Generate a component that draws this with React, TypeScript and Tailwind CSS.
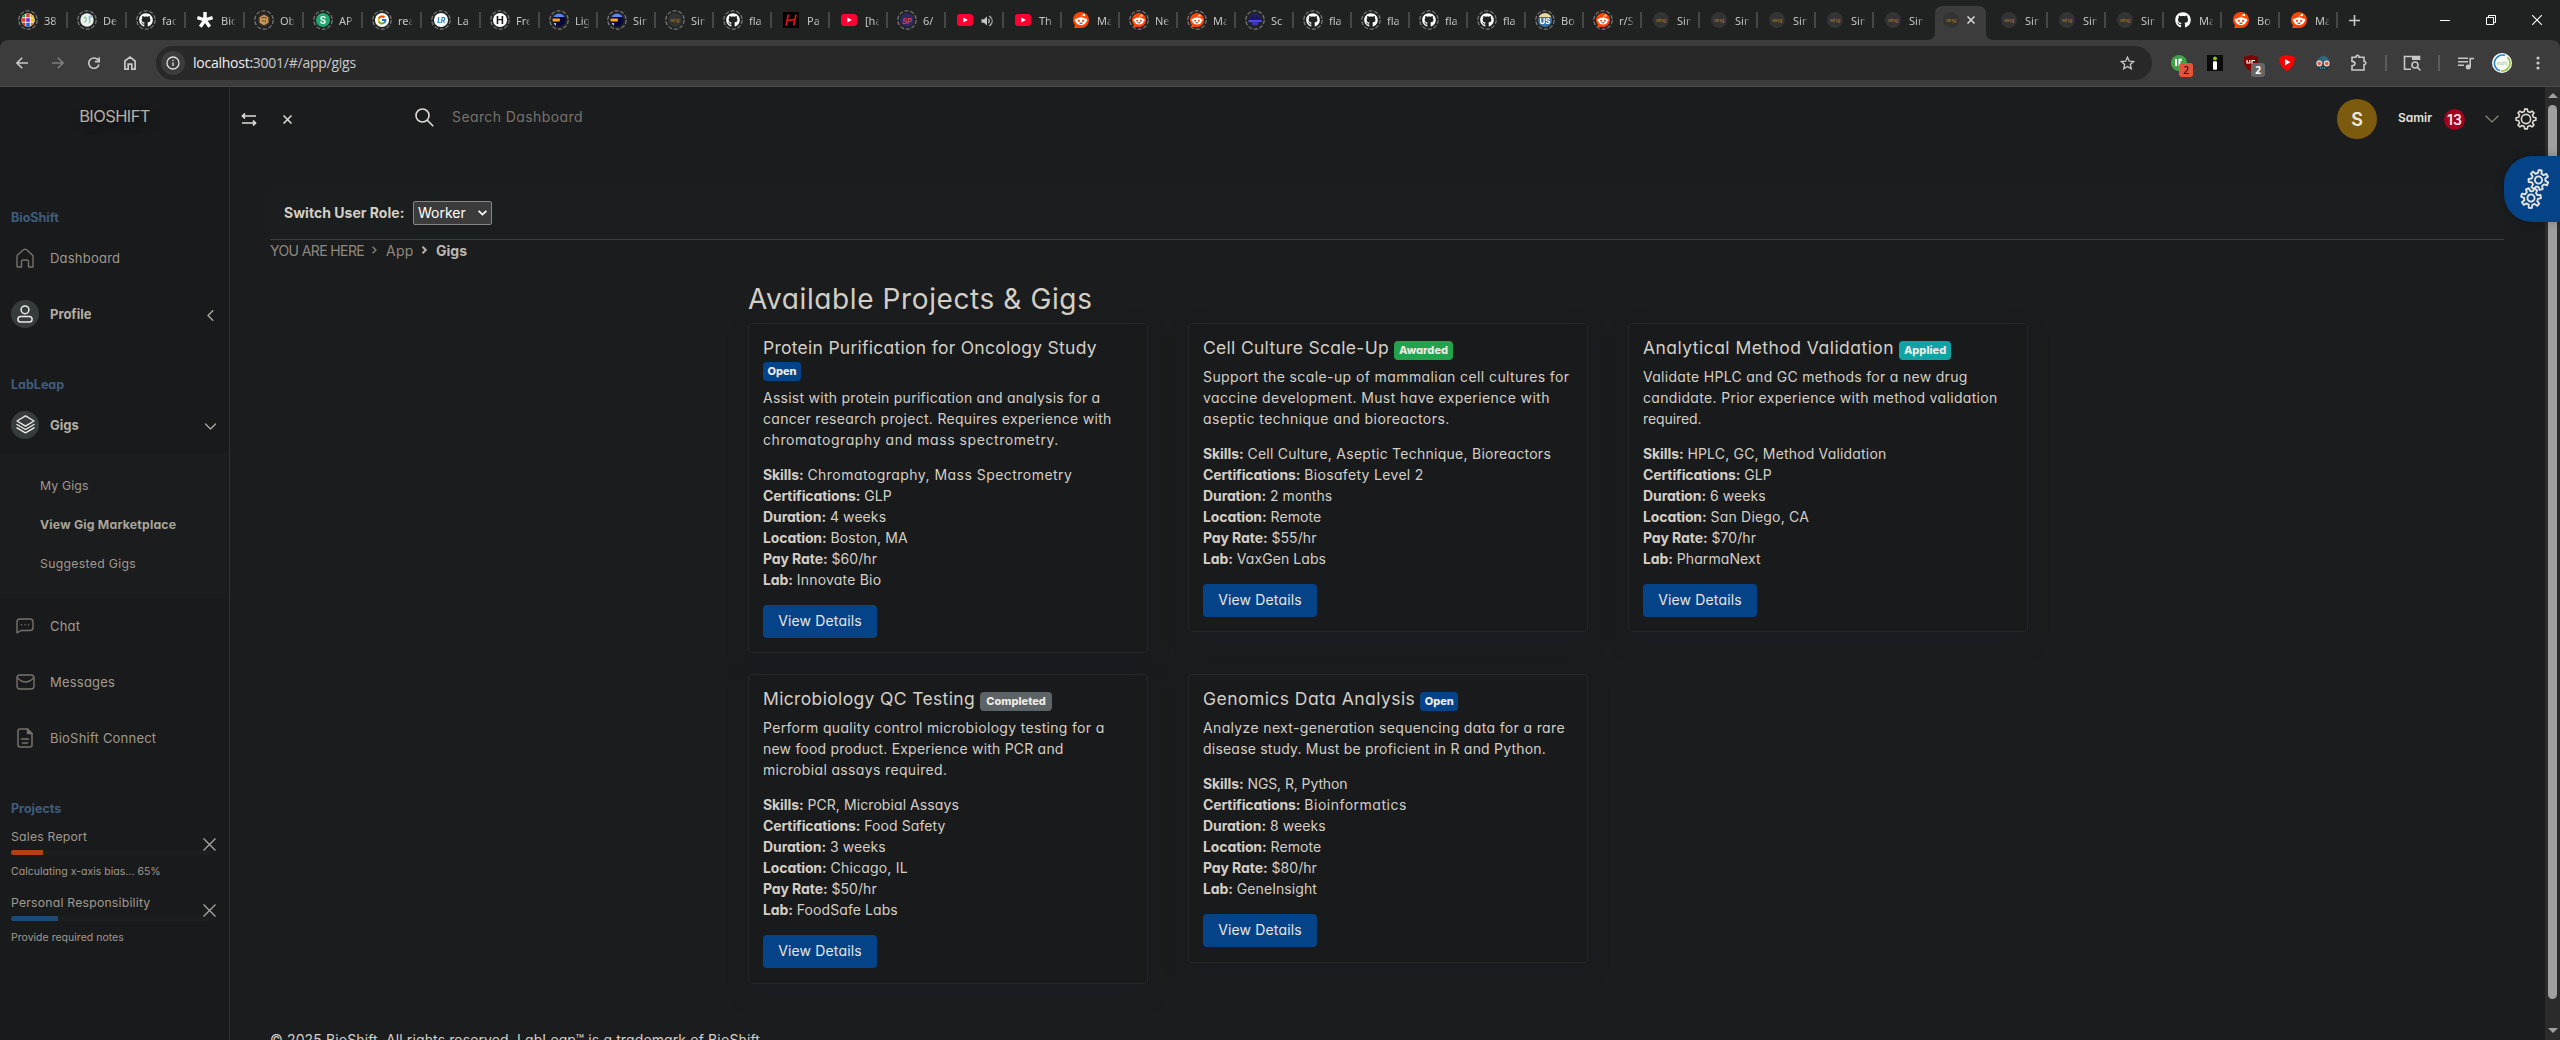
import React from "react";
import { FaGithub } from "react-icons/fa";
import { FcGoogle } from "react-icons/fc";

/* ---------- favicons ---------- */

const Svg = ({ children, size = 16 }: { children: React.ReactNode; size?: number }) => (
  <svg width={size} height={size} viewBox="0 0 16 16" className="block shrink-0">
    {children}
  </svg>
);

const Github = () => <FaGithub className="block size-4 text-white" />;

const Reddit = () => (
  <Svg>
    <circle cx="8" cy="8" r="8" fill="#ff4500" />
    <path d="M1 16 L3 11 L7 16 Z" fill="#ff4500" />
    <circle cx="3.2" cy="8" r="1.5" fill="#fff" />
    <circle cx="12.8" cy="8" r="1.5" fill="#fff" />
    <circle cx="11" cy="3" r="1.2" fill="#fff" />
    <path d="M8 5.5 Q8.3 3 10.5 3" stroke="#fff" strokeWidth=".7" fill="none" />
    <ellipse cx="8" cy="9.2" rx="5.2" ry="3.9" fill="#fff" />
    <circle cx="5.9" cy="8.8" r="1.1" fill="#ff4500" />
    <circle cx="10.1" cy="8.8" r="1.1" fill="#ff4500" />
    <path d="M5.8 10.8 Q8 12.8 10.2 10.8 Z" fill="#222" />
  </Svg>
);

const YouTube = () => (
  <Svg>
    <rect x="0" y="2" width="16" height="12" rx="3" fill="#ff0033" />
    <path d="M6.3 5.4 L10.8 8 L6.3 10.6 Z" fill="#fff" />
  </Svg>
);

const Sing = () => (
  <div className="flex size-4 items-center justify-center rounded-full bg-[#333333]">
    <span className="font-['Liberation_Sans'] text-[6px] leading-none tracking-[-0.2px] text-[#a67c1c]">sing</span>
  </div>
);

const Letter = ({ c, className }: { c: string; className: string }) => (
  <div className={`flex size-4 items-center justify-center rounded-full font-['Inter'] leading-none ${className}`}>{c}</div>
);

const Grid = () => (
  <Svg>
    <clipPath id="gridclip"><circle cx="8" cy="8" r="7.6" /></clipPath>
    <g clipPath="url(#gridclip)">
      <rect width="16" height="16" fill="#fff" />
      <rect x="0" y="0" width="5" height="5" fill="#2e9a4b" />
      <rect x="6" y="0" width="4" height="5" fill="#d8442f" />
      <rect x="11" y="0" width="5" height="5" fill="#f0a21b" />
      <rect x="0" y="6" width="5" height="4" fill="#e03a2c" />
      <rect x="6" y="6" width="4" height="4" fill="#7a1fd6" />
      <rect x="11" y="6" width="5" height="4" fill="#f3c21e" />
      <rect x="0" y="11" width="5" height="5" fill="#c9301f" />
      <rect x="6" y="11" width="4" height="5" fill="#1b62d6" />
      <rect x="11" y="11" width="5" height="5" fill="#e07a1c" />
    </g>
  </Svg>
);

const Pale = () => (
  <Svg>
    <circle cx="8" cy="8" r="7.6" fill="#e9f2ee" />
    <path d="M4.5 6 Q6 3.5 7 6 T5 11 M9.5 4.5 Q12 4.5 10.5 7.5 Q13 9 10 11.5" stroke="#86b79b" strokeWidth="1.2" fill="none" />
    <circle cx="12.5" cy="4" r="1.6" fill="#9fb9e0" />
  </Svg>
);

const Asterisk = () => (
  <Svg>
    <g stroke="#fff" strokeWidth="3.4">
      <path d="M8 8 V0 M8 8 L.4 5.6 M8 8 L15.6 5.6 M8 8 L3.3 14.8 M8 8 L12.7 14.8" />
    </g>
  </Svg>
);

const Cube = () => (
  <Svg>
    <circle cx="8" cy="8" r="7.4" fill="#3a3026" />
    <path d="M8 2 L13 5 V11 L8 14 L3 11 V5 Z" fill="#c99a5b" />
    <path d="M5 6 Q8 4 11 6 M5.5 9 H8 M9.5 8 V11" stroke="#5b3d18" strokeWidth="1.1" fill="none" />
  </Svg>
);

const Stripes = () => (
  <Svg>
    <clipPath id="stripeclip"><circle cx="8" cy="8" r="7.4" /></clipPath>
    <g clipPath="url(#stripeclip)">
      <rect width="16" height="16" fill="#06063c" />
      <rect width="16" height="4.6" fill="#5b84f2" />
      <rect y="6.2" width="9" height="3.6" rx="1" fill="#f9a51a" />
      <path d="M2 11 L5 12 L4 15 Z" fill="#cfdcff" />
    </g>
  </Svg>
);

const RedH = () => (
  <Svg>
    <rect width="16" height="16" fill="#000" />
    <path d="M5.4 2.5 L3 13.5 M13 2.5 L10.6 13.5 M4.2 8.6 L12 7.4" stroke="#e0121d" strokeWidth="1.7" />
  </Svg>
);

const Bot = () => (
  <Svg>
    <path d="M4 1 H12 V4 H14 V7 H2 V4 H4 Z" fill="#20206a" />
    <rect x="0.5" y="8" width="15" height="2.4" fill="#5148e8" />
    <path d="M4 10 H12 L11 14 H5 Z" fill="#3a34b8" />
    <rect x="5" y="4.5" width="2" height="1.3" fill="#0b0b22" />
    <rect x="9" y="4.5" width="2" height="1.3" fill="#0b0b22" />
  </Svg>
);

const Speaker = () => (
  <svg width="13" height="12" viewBox="0 0 13 12" className="block shrink-0" fill="none" stroke="#c5c6c5" strokeWidth="1.3">
    <path d="M.5 4.2 H3 L6 1.5 V10.5 L3 7.8 H.5 Z" fill="#c5c6c5" stroke="none" />
    <path d="M7.6 3.8 Q9 6 7.6 8.2 M8.4 1 Q14.4 6 8.4 11" />
  </svg>
);

type Tab = { icon: React.ReactNode; t: React.ReactNode; ring?: boolean };
const us = (
  <div className="flex size-4 items-end justify-center rounded-full bg-[linear-gradient(#e9d9a0_30%,#3a74ad_30%)]">
    <span className="pb-[2px] font-['Inter'] text-[9px] font-bold leading-none text-white">US</span>
  </div>
);
const leftTabs: Tab[] = [
  { icon: <Grid />, t: "38", ring: true },
  { icon: <Pale />, t: "De", ring: true },
  { icon: <Github />, t: "fac", ring: true },
  { icon: <Asterisk />, t: "Bio" },
  { icon: <Cube />, t: "Ob", ring: true },
  { icon: <Letter c="S" className="bg-[#1fa971] text-[11px] font-bold text-white" />, t: "AP", ring: true },
  { icon: <div className="rounded-full bg-white p-[2px]"><FcGoogle className="block size-3" /></div>, t: "rea", ring: true },
  { icon: <Letter c="LR" className="bg-white text-[8px] font-bold italic tracking-[-0.5px] text-[#1c7fc4]" />, t: "La", ring: true },
  { icon: <Letter c="H" className="bg-white text-[12px] font-bold text-[#1c1c1c]" />, t: "Fre", ring: true },
  { icon: <Stripes />, t: "Lig", ring: true },
  { icon: <Stripes />, t: "Sin", ring: true },
  { icon: <Sing />, t: "Sin", ring: true },
  { icon: <Github />, t: "fla", ring: true },
  { icon: <RedH />, t: "Pa" },
  { icon: <YouTube />, t: "[ha" },
  { icon: <Letter c="SP" className="bg-[#2c2a5e] text-[9px] font-bold italic tracking-[-0.5px] text-[#d8434e]" />, t: "6/", ring: true },
  { icon: <YouTube />, t: <Speaker /> },
  { icon: <YouTube />, t: "Th" },
  { icon: <Reddit />, t: "Ma" },
  { icon: <Reddit />, t: "Ne", ring: true },
  { icon: <Reddit />, t: "Ma", ring: true },
  { icon: <Bot />, t: "Sc", ring: true },
  { icon: <Github />, t: "fla", ring: true },
  { icon: <Github />, t: "fla", ring: true },
  { icon: <Github />, t: "fla", ring: true },
  { icon: <Github />, t: "fla", ring: true },
  { icon: us, t: "Bo", ring: true },
  { icon: <Reddit />, t: "r/S", ring: true },
  { icon: <Sing />, t: "Sin" },
  { icon: <Sing />, t: "Sin" },
  { icon: <Sing />, t: "Sin" },
  { icon: <Sing />, t: "Sin" },
  { icon: <Sing />, t: "Sin" },
];
const rightTabs: Tab[] = [
  { icon: <Sing />, t: "Sin" },
  { icon: <Sing />, t: "Sin" },
  { icon: <Sing />, t: "Sin" },
  { icon: <Github />, t: "Ma" },
  { icon: <Reddit />, t: "Bo" },
  { icon: <Reddit />, t: "Ma" },
];

function TabItem({ tab, wide, last }: { tab: Tab; wide?: boolean; last?: boolean }) {
  return (
    <div className={`relative flex h-10 shrink-0 items-center ${wide ? "w-[59px]" : "w-[58px]"}`}>
      <div className="relative ml-[9px] flex size-5 shrink-0 items-center justify-center">
        <div className={tab.ring ? "flex scale-[0.88]" : "flex"}>{tab.icon}</div>
        {tab.ring && (
          <svg className="absolute inset-0" width="20" height="20" viewBox="0 0 20 20" fill="none">
            <circle cx="10" cy="10" r="9.2" stroke="#747574" strokeWidth="1.3" strokeDasharray="4 1.8" />
          </svg>
        )}
      </div>
      <div className="ml-[6px] w-[14px] overflow-hidden whitespace-nowrap pt-[2px] font-['Noto_Sans'] text-[11px] leading-4 text-[#c5c6c5] [mask-image:linear-gradient(90deg,#000_65%,rgba(0,0,0,0.2))]">
        {tab.t}
      </div>
      {!last && <div className="absolute right-0 top-3 h-4 w-[2px] bg-[#454746]" />}
    </div>
  );
}

function TabStrip() {
  return (
    <div className="flex h-10 bg-[#202221] pl-[9px]">
      {leftTabs.map((t, i) => (
        <TabItem key={i} tab={t} wide={i < 9} last={i === leftTabs.length - 1} />
      ))}
      <div className="relative h-10 w-[58px] shrink-0">
        <svg className="absolute -left-[5px] top-[6px]" width="67" height="34" viewBox="0 0 67 34">
          <path d="M0 34 Q8 34 8 26 V8 Q8 0 16 0 H51 Q59 0 59 8 V26 Q59 34 67 34 Z" fill="#3c3c3c" />
        </svg>
        <div className="relative flex h-10 items-center pl-[11px]">
          <Sing />
          <svg className="ml-[8px]" width="8" height="8" viewBox="0 0 8 8" stroke="#dcdcdc" strokeWidth="1.5">
            <path d="M.5 .5 L7.5 7.5 M7.5 .5 L.5 7.5" />
          </svg>
        </div>
      </div>
      {rightTabs.map((t, i) => (
        <TabItem key={i} tab={t} />
      ))}
      <div className="flex flex-1 items-center">
        <svg className="ml-[11px]" width="11" height="11" viewBox="0 0 11 11" stroke="#c9cac9" strokeWidth="1.6">
          <path d="M5.5 0 V11 M0 5.5 H11" />
        </svg>
        <svg className="ml-auto" width="10" height="10" viewBox="0 0 10 10"><path d="M0 5.5 H10" stroke="#fff" /></svg>
        <svg className="ml-[36px]" width="10" height="10" viewBox="0 0 10 10" fill="none" stroke="#fff">
          <path d="M.5 2.5 H7.5 V9.5 H.5 Z M2.5 2.5 V.5 H9.5 V7.5 H7.5" />
        </svg>
        <svg className="ml-[36px] mr-[18px]" width="10" height="10" viewBox="0 0 10 10" stroke="#fff" strokeWidth="1.1">
          <path d="M0 0 L10 10 M10 0 L0 10" />
        </svg>
      </div>
    </div>
  );
}

/* ---------- toolbar ---------- */

const Slot = ({ children }: { children: React.ReactNode }) => (
  <div className="relative flex w-9 shrink-0 items-center justify-center">{children}</div>
);

function Toolbar() {
  return (
    <div className="bg-[#202221]">
      <div className="flex h-[47px] items-center rounded-t-lg border-b border-[#4a4a4a] bg-[#3c3c3c] pl-1">
        <Slot>
          <svg width="12" height="12" viewBox="0 0 12 12" fill="none" stroke="#c8c8c8" strokeWidth="1.6"><path d="M12 6 H1 M6.2 .8 L1 6 L6.2 11.2" /></svg>
        </Slot>
        <Slot>
          <svg width="12" height="12" viewBox="0 0 12 12" fill="none" stroke="#7d7d7d" strokeWidth="1.6"><path d="M0 6 H11 M5.8 .8 L11 6 L5.8 11.2" /></svg>
        </Slot>
        <Slot>
          <svg width="12" height="12" viewBox="0 0 12 12" fill="none" stroke="#c8c8c8" strokeWidth="1.6">
            <path d="M11 7.5 A5.2 5.2 0 1 1 10.4 3.4 M11.2 .2 V4.6 H6.8" />
          </svg>
        </Slot>
        <Slot>
          <svg width="12" height="14" viewBox="0 0 12 14" fill="none" stroke="#c8c8c8" strokeWidth="1.7">
            <path d="M.9 5 L6 1.1 L11.1 5 V13.1 H7.8 V8.2 H4.2 V13.1 H.9 Z" />
          </svg>
        </Slot>
        <div className="ml-2 flex h-[34px] w-[1996px] shrink-0 items-center rounded-full bg-[#282828] pl-[5px] pr-[17px]">
          <div className="flex size-6 items-center justify-center rounded-full bg-[#3c3c3c]">
            <svg width="14" height="14" viewBox="0 0 14 14" fill="none" stroke="#e0e0e0" strokeWidth="1.3">
              <circle cx="7" cy="7" r="6" />
              <path d="M7 6.2 V10 M7 3.8 V5" />
            </svg>
          </div>
          <span className="ml-2 font-['Open_Sans'] text-[14px] leading-5 tracking-[-0.25px] text-[#c9c9c9]">
            <span className="text-[#f0f0f0]">localhost:</span>3001/#/app/gigs
          </span>
          <svg className="ml-auto" width="15" height="14" viewBox="0 0 15 14" fill="none" stroke="#c8c8c8" strokeWidth="1.3">
            <path d="M7.5 1.2 L9.3 5.2 L13.6 5.6 L10.3 8.5 L11.3 12.8 L7.5 10.5 L3.7 12.8 L4.7 8.5 L1.4 5.6 L5.7 5.2 Z" />
          </svg>
        </div>
        <div className="ml-[9px] flex h-9">
          <Slot>
            <svg width="16" height="16" viewBox="0 0 16 16"><circle cx="8" cy="8" r="8" fill="#43a047" /><path d="M5 4 V11 M8.5 11 V4.8 H11" stroke="#fff" strokeWidth="2" fill="none" /></svg>
            <div className="absolute left-[18px] top-[18px] flex h-[14px] w-[14px] items-center justify-center rounded-[3px] bg-[#e5533d] font-['Noto_Sans'] text-[10px] font-medium leading-none text-[#2a0f0b]">2</div>
          </Slot>
          <Slot>
            <svg width="16" height="16" viewBox="0 0 16 16"><rect width="16" height="16" fill="#0b0b0b" /><circle cx="8" cy="3.4" r="1.9" fill="#8bc919" /><rect x="6" y="6.3" width="4" height="8.4" rx="1" fill="#fff" /></svg>
          </Slot>
          <Slot>
            <svg width="16" height="16" viewBox="0 0 16 16"><path d="M8 0 L15 2 V8 Q14 13 8 16 Q2 13 1 8 V2 Z" fill="#800000" /><path d="M4 5 V8 H6.8 V5 M9 9 V5.5 H12" stroke="#fff" strokeWidth="1.2" fill="none" /></svg>
            <div className="absolute left-[18px] top-[18px] flex h-[14px] w-[14px] items-center justify-center rounded-[3px] bg-[#666] font-['Noto_Sans'] text-[10px] font-bold leading-none text-white">2</div>
          </Slot>
          <Slot>
            <svg width="16" height="16" viewBox="0 0 16 16"><path d="M8 0 L16 2 Q15.500 12 8 16 Q.5 12 0 2 Z" fill="#f00" /><path d="M6 4 L11.500 7.200 L6 10.400 Z" fill="#fff" /></svg>
          </Slot>
          <Slot>
            <svg width="16" height="16" viewBox="0 0 16 16">
              <path d="M1 9 Q1 3 9 .4 Q15 3 15 9 Z" fill="#33677c" />
              <rect x="3" y="11" width="10" height="4" fill="#1d3a47" />
              <path d="M5 13 H11" stroke="#8fb3c2" strokeWidth="1" strokeDasharray="1 1" />
              <circle cx="4.300" cy="8.500" r="2.900" fill="#f2d9cf" /><circle cx="11.700" cy="8.500" r="2.900" fill="#f2d9cf" />
              <circle cx="4.300" cy="8.500" r="1.800" fill="#e2573c" /><circle cx="11.700" cy="8.500" r="1.800" fill="#e2573c" />
            </svg>
          </Slot>
          <Slot>
            <svg width="18" height="18" viewBox="0 0 18 18" fill="none" stroke="#c8c8c8" strokeWidth="1.600">
              <path d="M2 3.200 H6 V2.200 Q7.500 .6 9 2.200 V3.200 H14 V7.500 H15 Q16.800 9 15 10.500 H14 V16 H2 V11.800 Q5 11.500 5 9.600 Q5 7.700 2 7.400 Z" />
            </svg>
          </Slot>
        </div>
        <div className="ml-2 h-4 w-[2px] bg-[#5c5c5c]" />
        <div className="ml-[7px] flex"><Slot>
          <svg width="18" height="16" viewBox="0 0 18 16" fill="none" stroke="#c8c8c8" strokeWidth="1.600">
            <path d="M8 14.200 H1.500 V1.500 H16.500 V5" /><rect x="9" y="1" width="8" height="4" fill="#c8c8c8" stroke="none" />
            <circle cx="12" cy="10" r="3" /><path d="M14.200 12.200 L17.400 15.400" />
          </svg>
        </Slot></div>
        <div className="ml-2 h-4 w-[2px] bg-[#5c5c5c]" />
        <div className="ml-2 flex">
          <Slot>
            <svg width="16" height="13" viewBox="0 0 16 13" fill="none" stroke="#c8c8c8" strokeWidth="1.600">
              <path d="M0 1.300 H10 M0 4.800 H10 M0 8.300 H6" /><circle cx="10.200" cy="10" r="1.700" fill="#c8c8c8" /><path d="M12.200 10 V1.500 H16" />
            </svg>
          </Slot>
          <Slot>
            <svg width="20" height="20" viewBox="0 0 20 20" fill="none">
              <circle cx="10" cy="10" r="10" fill="#fff" />
              <path d="M13 2.400 A8 8 0 1 0 8 17.800" stroke="#2187c9" strokeWidth="1.700" />
              <path d="M15.500 4.200 A8 8 0 0 1 9 17.900" stroke="#8cc63f" strokeWidth="1.700" />
              <text x="10" y="12" textAnchor="middle" fontSize="5" fontFamily="Lato" fill="#9bbf6a">mohj</text>
            </svg>
          </Slot>
          <Slot>
            <svg width="4" height="14" viewBox="0 0 4 14" fill="#c8c8c8"><circle cx="2" cy="2" r="1.600" /><circle cx="2" cy="7" r="1.600" /><circle cx="2" cy="12" r="1.600" /></svg>
          </Slot>
        </div>
      </div>
    </div>
  );
}

/* ---------- sidebar ---------- */

const SideTitle = ({ children, className }: { children: string; className: string }) => (
  <div className={`h-5 pl-[11px] text-[12.5px] font-bold leading-5 text-[#3f5d7b] ${className}`}>{children}</div>
);

function SideRow({ icon, label, round, bold, end }: { icon: React.ReactNode; label: string; round?: boolean; bold?: boolean; end?: React.ReactNode }) {
  return (
    <div className="flex h-14 items-center pl-[11px] pr-[11px]">
      <div className={`-mt-[3px] flex size-7 items-center justify-center rounded-full ${round ? "bg-[#363c3e]" : ""}`}>{icon}</div>
      <span className={`ml-[11px] text-[13px] ${bold ? "font-bold text-[#b4aea3]" : "tracking-[0.22px] text-[#a0998d]"}`}>{label}</span>
      <div className="ml-auto">{end}</div>
    </div>
  );
}

function Project({ name, desc, barClass, className }: { name: string; desc: string; barClass: string; className: string }) {
  return (
    <div className={`flex pl-[11px] ${className}`}>
      <div className="w-[202px] shrink-0">
        <div className="h-5 whitespace-nowrap text-[12.25px] leading-5 tracking-[0.2px] text-[#a0998d]">{name}</div>
        <div className="mt-[3px] h-[5px] w-[202px] rounded-full bg-[#1c1d1f]">
          <div className={`h-[5px] rounded-l-full ${barClass}`} />
        </div>
        <div className="mt-[7px] h-[19px] whitespace-nowrap text-[10.5px] leading-[19px] tracking-[0.02px] text-[#a0998d]">{desc}</div>
      </div>
      <svg className="-ml-[10px] mt-[11px] shrink-0" width="13" height="13" viewBox="0 0 13 13" stroke="#a9a69f" strokeWidth="1.300">
        <path d="M.5 .5 L12.500 12.500 M12.500 .5 L.5 12.500" />
      </svg>
    </div>
  );
}

const stroke = { fill: "none", strokeLinecap: "round" as const, strokeLinejoin: "round" as const };

function Sidebar() {
  return (
    <aside className="flex w-[230px] shrink-0 flex-col border-r border-[#1f3447] bg-[#191a1c]">
      <div className="flex h-[58px] items-center justify-center text-[16.5px] tracking-[-0.6px] text-[#b5afa4] [text-shadow:2px_4px_8px_#11141a]">BIOSHIFT</div>
      <SideTitle className="mt-[63px]">BioShift</SideTitle>
      <div className="mt-[3px]">
        <SideRow label="Dashboard" icon={
          <svg width="18" height="20" viewBox="0 0 18 20" stroke="#77716a" strokeWidth="1.400" {...stroke}>
            <path d="M1 18.500 V9 Q1 7.500 2 6.600 L7.500 1.800 Q9 .6 10.500 1.800 L16 6.600 Q17 7.500 17 9 V18.500 Q17 19 16.500 19 H12.500 V13.500 Q12.500 12 11 12 H7 Q5.500 12 5.500 13.500 V19 H1.500 Q1 19 1 18.500 Z" />
          </svg>} />
        <SideRow round bold label="Profile" icon={
          <svg width="16" height="18" viewBox="0 0 16 18" stroke="#eceae6" strokeWidth="1.500" {...stroke}>
            <circle cx="8" cy="4.800" r="3.900" /><rect x=".9" y="11.400" width="14.200" height="5.600" rx="2.800" />
          </svg>} end={<svg width="15" height="11" viewBox="0 0 15 11" stroke="#b0aba1" strokeWidth="1.400" {...stroke}><path d="M9.800 .7 L5 5.500 L9.800 10.300" /></svg>} />
      </div>
      <SideTitle className="mt-[32px]">LabLeap</SideTitle>
      <div className="mt-[3px]">
        <SideRow round bold label="Gigs" icon={
          <svg width="19" height="19" viewBox="0 0 19 19" stroke="#eceae6" strokeWidth="1.400" {...stroke}>
            <path d="M9.500 .8 L18 6 L9.500 11.200 L1 6 Z M1 9.500 L9.500 14.500 L18 9.500 M1 12.800 L9.500 17.900 L18 12.800" />
          </svg>} end={<svg width="15" height="11" viewBox="0 0 15 11" stroke="#b0aba1" strokeWidth="1.300" {...stroke}><path d="M2.500 3 L7.500 8 L12.500 3" /></svg>} />
      </div>
      <div className="flex h-[145px] flex-col justify-center bg-[#1b1c1e] pb-[3px] pl-10 text-[12.25px] text-[#a0998d]">
        <div className="flex h-[39px] items-center tracking-[0.15px]">My Gigs</div>
        <div className="flex h-[39px] items-center font-bold tracking-[0.2px] text-[#aaa499]">View Gig Marketplace</div>
        <div className="flex h-[39px] items-center tracking-[0.3px]">Suggested Gigs</div>
      </div>
      <SideRow label="Chat" icon={
        <svg width="18" height="16" viewBox="0 0 18 16" stroke="#77716a" strokeWidth="1.400" {...stroke}>
          <path d="M1 14.800 V4 Q1 1 4 1 H14 Q17 1 17 4 V9.500 Q17 12.500 14 12.500 H5 Z M5.500 6.800 H5.600 M9 6.800 H9.100 M12.500 6.800 H12.600" />
        </svg>} />
      <SideRow label="Messages" icon={
        <svg width="19" height="16" viewBox="0 0 19 16" stroke="#77716a" strokeWidth="1.400" {...stroke}>
          <rect x="1" y="1" width="17" height="14" rx="3" /><path d="M1.500 4 Q9.500 12 17.500 4" />
        </svg>} />
      <SideRow label="BioShift Connect" icon={
        <svg width="16" height="20" viewBox="0 0 16 20" stroke="#77716a" strokeWidth="1.500" {...stroke}>
          <path d="M10.500 1 H3 Q1 1 1 3 V17 Q1 19 3 19 H13 Q15 19 15 17 V5.500 Z M4.500 11 H11.500 M5.500 15 H10.500" /><path d="M10.500 1 V5.500 H15 Z" fill="#77716a" />
        </svg>} />
      <SideTitle className="mt-8">Projects</SideTitle>
      <Project className="mt-2" name="Sales Report" desc="Calculating x-axis bias... 65%" barClass="w-8 bg-[#b1420f]" />
      <Project className="mt-3" name="Personal Responsibility" desc="Provide required notes" barClass="w-[47px] bg-[#1c4a77]" />
    </aside>
  );
}

/* ---------- main ---------- */

const gearPath = (n: number, r1: number, r2: number) => {
  const pts: string[] = [];
  for (let i = 0; i < n; i++) {
    for (const [o, r] of [[-0.3, r1], [-0.17, r2], [0.17, r2], [0.3, r1]]) {
      const a = ((i + o) / n) * Math.PI * 2;
      pts.push(`${(r * Math.sin(a)).toFixed(2)} ${(-r * Math.cos(a)).toFixed(2)}`);
    }
  }
  return `M${pts.join(" L")} Z`;
};

type Gig = {
  title: string;
  titleClass: string;
  status: string;
  badgeClass: string;
  lines: [string, string][];
  meta: [string, string, string?][];
};
const gigs: Gig[] = [
  {
    title: "Protein Purification for Oncology Study", titleClass: "tracking-[0.27px]", status: "Open", badgeClass: "w-[38px] bg-[#054389]",
    lines: [
      ["Assist with protein purification and analysis for a", "tracking-[0.26px]"],
      ["cancer research project. Requires experience with", "tracking-[0.3px]"],
      ["chromatography and mass spectrometry.", "tracking-[0.57px]"],
    ],
    meta: [["Skills:", "Chromatography, Mass Spectrometry", "tracking-[0.46px]"], ["Certifications:", "GLP"], ["Duration:", "4 weeks"], ["Location:", "Boston, MA"], ["Pay Rate:", "$60/hr"], ["Lab:", "Innovate Bio", "tracking-[0.2px]"]],
  },
  {
    title: "Cell Culture Scale-Up", titleClass: "tracking-[0.3px]", status: "Awarded", badgeClass: "w-[59px] bg-[#23a24e]",
    lines: [
      ["Support the scale-up of mammalian cell cultures for", "tracking-[0.4px]"],
      ["vaccine development. Must have experience with", "tracking-[0.4px]"],
      ["aseptic technique and bioreactors.", "tracking-[0.46px]"],
    ],
    meta: [["Skills:", "Cell Culture, Aseptic Technique, Bioreactors", "tracking-[0.26px]"], ["Certifications:", "Biosafety Level 2", "tracking-[0.32px]"], ["Duration:", "2 months"], ["Location:", "Remote"], ["Pay Rate:", "$55/hr"], ["Lab:", "VaxGen Labs"]],
  },
  {
    title: "Analytical Method Validation", titleClass: "tracking-[0.46px]", status: "Applied", badgeClass: "w-[52px] bg-[#0fa3a6]",
    lines: [
      ["Validate HPLC and GC methods for a new drug", "tracking-[0.3px]"],
      ["candidate. Prior experience with method validation", "tracking-[0.33px]"],
      ["required.", "tracking-[-0.1px]"],
    ],
    meta: [["Skills:", "HPLC, GC, Method Validation", "tracking-[0.17px]"], ["Certifications:", "GLP"], ["Duration:", "6 weeks"], ["Location:", "San Diego, CA", "tracking-[0.2px]"], ["Pay Rate:", "$70/hr"], ["Lab:", "PharmaNext"]],
  },
  {
    title: "Microbiology QC Testing", titleClass: "tracking-[0.35px]", status: "Completed", badgeClass: "w-[72px] bg-[#5c6367]",
    lines: [
      ["Perform quality control microbiology testing for a", "tracking-[0.32px]"],
      ["new food product. Experience with PCR and", "tracking-[0.2px]"],
      ["microbial assays required.", "tracking-[0.35px]"],
    ],
    meta: [["Skills:", "PCR, Microbial Assays"], ["Certifications:", "Food Safety"], ["Duration:", "3 weeks"], ["Location:", "Chicago, IL", "tracking-[0.2px]"], ["Pay Rate:", "$50/hr"], ["Lab:", "FoodSafe Labs"]],
  },
  {
    title: "Genomics Data Analysis", titleClass: "tracking-[0.45px]", status: "Open", badgeClass: "w-[38px] bg-[#054389]",
    lines: [
      ["Analyze next-generation sequencing data for a rare", "tracking-[0.35px]"],
      ["disease study. Must be proficient in R and Python.", "tracking-[0.21px]"],
    ],
    meta: [["Skills:", "NGS, R, Python", "tracking-[-0.1px]"], ["Certifications:", "Bioinformatics", "tracking-[0.5px]"], ["Duration:", "8 weeks"], ["Location:", "Remote"], ["Pay Rate:", "$80/hr"], ["Lab:", "GeneInsight"]],
  },
];

function GigCard({ gig }: { gig: Gig }) {
  const long = gig.title.length > 30;
  return (
    <div className="rounded-[4px] border border-[#242628] bg-[#191a1c] px-[14px] pb-[14.500px] pt-[13px] shadow-[0_8px_18px_rgba(22,30,36,0.55)]">
      <div className={`flex ${long ? "h-[42px] flex-col items-start" : "h-[21px]"}`}>
        <span className={`mr-[5px] whitespace-nowrap text-[17.5px] leading-[21px] ${gig.titleClass}`}>{gig.title}</span>
        <span className={`mt-[4px] flex h-[19px] shrink-0 items-center justify-center rounded-[4px] text-[11px] font-extrabold leading-none text-[#ece9e3] ${gig.badgeClass}`}>{gig.status}</span>
      </div>
      <div className="mt-[7.500px] whitespace-nowrap leading-[21px]">
        {gig.lines.map(([l, c]) => <div key={l} className={c}>{l}</div>)}
      </div>
      <div className="mt-[14px] whitespace-nowrap leading-[21px]">
        {gig.meta.map(([k, v, c]) => (
          <div key={k}><b className="tracking-[-0.1px]">{k}</b> <span className={c ?? "tracking-[0.08px]"}>{v}</span></div>
        ))}
      </div>
      <button className="mt-[15.400px] flex h-[33px] w-[114px] items-center justify-center rounded-[4px] bg-[#054389] pb-[2px] text-[14px] tracking-[0.15px] text-[#e8e6e1]">View Details</button>
    </div>
  );
}

function Main() {
  return (
    <main className="flex min-w-0 flex-1 flex-col bg-[#1b1c1e] text-[14px] text-[#d3cfc6]">
      <div className="flex h-[64px] shrink-0 items-center pl-[11px] pr-[8px]">
        <svg width="16" height="13" viewBox="0 0 16 13" fill="none" stroke="#e0ddd7" strokeWidth="1.700"><path d="M15 3 H2 M4 .5 L1.500 3 L4 5.500 M1 10 H14 M12 7.500 L14.500 10 L12 12.500" /></svg>
        <svg className="ml-[26px]" width="9" height="9" viewBox="0 0 9 9" stroke="#e0ddd7" strokeWidth="1.500"><path d="M.5 .5 L8.500 8.500 M8.500 .5 L.5 8.500" /></svg>
        <svg className="-mt-[4px] ml-[123px]" width="19" height="19" viewBox="0 0 19 19" fill="none" stroke="#e0ddd7" strokeWidth="1.600" strokeLinecap="round"><circle cx="7.500" cy="7.500" r="6.500" /><path d="M12.300 12.300 L17.800 17.800" /></svg>
        <span className="-mt-[6px] ml-[18px] tracking-[0.4px] text-[#77736b]">Search Dashboard</span>
        <div className="ml-auto flex items-center">
          <div className="flex size-10 items-center justify-center rounded-full bg-[#7d5b0e] text-[18px] font-semibold text-[#ece9e3]">S</div>
          <span className="-mt-[3px] ml-[21px] w-[36px] whitespace-nowrap text-[12px] font-semibold text-[#e6e3dd]">Samir</span>
          <span className="ml-[10px] flex size-[21px] items-center justify-center rounded-full bg-[#a30022] text-[14px] font-semibold text-[#ece9e3]">13</span>
          <svg className="ml-5" width="14" height="8" viewBox="0 0 14 8" fill="none" stroke="#8f8a80" strokeWidth="1.200"><path d="M.6 .8 L7 7 L13.400 .8" /></svg>
          <svg className="ml-4" width="22" height="22" viewBox="-11 -11 22 22" fill="none" stroke="#dedbd4" strokeWidth="1.600" strokeLinejoin="round"><path d={gearPath(8, 7.6, 10)} /><circle r="4.600" /></svg>
        </div>
      </div>
      <div className="flex flex-1 flex-col pl-10 pr-[41px] pt-[36px]">
        <div className="flex h-[53px] items-center border-b border-[#3a3d3e] bg-[#1b1e1f] pl-[14px] font-bold">
          <span className="w-[121px] whitespace-nowrap pb-[2px] text-[14px] tracking-[0.02px]">Switch User Role:</span>
          <div className="ml-2 flex h-6 w-[79px] items-center rounded-[2px] border border-[#858585] bg-[#3b3b3b] pl-1 pr-[4px] font-normal text-white">
            <span className="pb-[1px] text-[14px]">Worker</span>
            <svg className="ml-auto" width="9" height="6" viewBox="0 0 9 6" fill="none" stroke="#fff" strokeWidth="1.800"><path d="M.6 .8 L4.500 4.600 L8.400 .8" /></svg>
          </div>
        </div>
        <div className="flex h-[21px] items-center whitespace-nowrap pb-[1px] text-[#8e897f]">
          <span className="w-[94px] tracking-[-0.6px]">YOU ARE HERE</span>
          <svg className="ml-2" width="5" height="8" viewBox="0 0 5 8" fill="none" stroke="#8e897f" strokeWidth="1.200"><path d="M.5 .8 L4 4 L.5 7.200" /></svg>
          <span className="ml-[9px] w-[28px] tracking-[0.3px]">App</span>
          <svg className="ml-2" width="5" height="8" viewBox="0 0 5 8" fill="none" stroke="#b9b4aa" strokeWidth="1.900"><path d="M.5 .8 L4 4 L.5 7.200" /></svg>
          <span className="ml-[9px] font-bold text-[#bdb8ae]">Gigs</span>
        </div>
        <div className="ml-[478px] w-[1280px] pt-[20px]">
          <h1 className="h-[42px] whitespace-nowrap text-[28px] leading-[36px] tracking-[0.6px]">Available Projects &amp; Gigs</h1>
          <div className="grid grid-cols-3 items-start gap-x-10 gap-y-[21px]">
            {gigs.map((g) => <GigCard key={g.title} gig={g} />)}
          </div>
        </div>
        <footer className="mt-[45px] whitespace-nowrap leading-[21px] tracking-[0.12px]">© 2025 BioShift. All rights reserved. LabLeap™ is a trademark of BioShift.</footer>
      </div>
    </main>
  );
}

export default function App() {
  return (
    <div className="relative flex h-[1040px] w-[2560px] flex-col overflow-hidden bg-[#1b1c1e] font-['Inter',sans-serif] [font-feature-settings:'cv11']">
      <TabStrip />
      <Toolbar />
      <div className="flex h-[953px]">
        <Sidebar />
        <Main />
        <div className="flex w-[15px] shrink-0 flex-col items-center bg-[#2b2b2b] pt-[6px]">
          <svg width="10" height="5" viewBox="0 0 10 5" fill="#a0a0a0"><path d="M5 0 L10 5 H0 Z" /></svg>
          <div className="mt-[7px] h-[894px] w-[9px] rounded-full bg-[#9f9f9f]" />
          <svg className="mt-[29px]" width="10" height="5" viewBox="0 0 10 5" fill="#a0a0a0"><path d="M5 5 L10 0 H0 Z" /></svg>
        </div>
      </div>
      <div className="absolute right-0 top-[156px] flex h-[66px] w-[56px] items-center justify-center rounded-l-[28px] bg-[#054389] pl-[5px] shadow-[0_0_10px_rgba(0,0,0,0.25)]">
        <svg width="32" height="42" viewBox="-16 -21 32 42" fill="none" stroke="#e4e2dd" strokeWidth="1.900" strokeLinejoin="round">
          <g transform="translate(3.500 -9) rotate(10)"><path d={gearPath(7, 7, 10)} /><circle r="3.600" /></g>
          <g transform="translate(-4 9) rotate(30)"><path d={gearPath(7, 7, 10)} /><circle r="3.600" /></g>
        </svg>
      </div>
    </div>
  );
}
